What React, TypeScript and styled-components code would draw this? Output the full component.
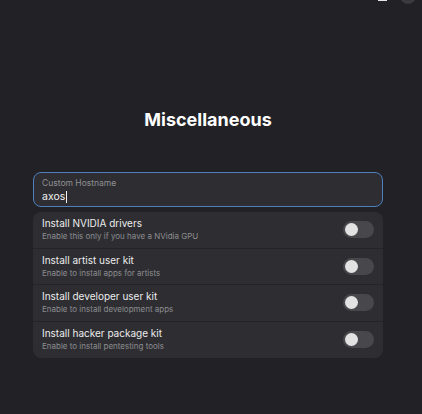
import React from 'react';
import styled, { createGlobalStyle } from 'styled-components';

const GlobalStyle = createGlobalStyle`
  html, body {
    margin: 0;
    padding: 0;
    background: #222226;
    font-family: Inter, "Noto Sans", sans-serif;
    color: #ffffff;
  }
`;

const Page = styled.div`
  position: relative;
  width: 422px;
  height: 414px;
  box-sizing: border-box;
  padding-right: 6px;
  overflow: hidden;
  display: flex;
  flex-direction: column;
  align-items: center;
`;

const HeaderBits = styled.div`
  position: absolute;
  top: 0;
  right: 0;
  width: 60px;
  height: 10px;
`;

const MenuBar = styled.div`
  position: absolute;
  top: -1px;
  left: 16px;
  width: 9px;
  height: 2px;
  background: #e6e6e6;
`;

const CloseCircle = styled.div`
  position: absolute;
  top: -12px;
  left: 38px;
  width: 16px;
  height: 16px;
  border-radius: 50%;
  background: #3a3a3e;
`;

const Title = styled.h1`
  margin: 109px 0 0;
  font-size: 18px;
  font-weight: 700;
  line-height: 22px;
`;

const Form = styled.div`
  margin-top: 41px;
  width: 350px;
  display: flex;
  flex-direction: column;
  gap: 5px;
`;

const Entry = styled.div`
  height: 35px;
  box-sizing: border-box;
  border: 1.5px solid #4f7fbf;
  border-radius: 8px;
  background: #2e2e32;
  padding: 5px 8px 0;
  display: flex;
  flex-direction: column;
`;

const EntryLabel = styled.span`
  font-size: 8.5px;
  line-height: 11px;
  color: #8e8e92;
`;

const EntryValue = styled.span`
  font-size: 10.5px;
  line-height: 15px;
  color: #f2f2f2;
  display: flex;
  align-items: center;
`;

const Caret = styled.span`
  display: inline-block;
  width: 1px;
  height: 12px;
  background: #f2f2f2;
  margin-left: 1px;
`;

const List = styled.div`
  background: #2e2e32;
  border-radius: 8px;
  overflow: hidden;
`;

const Row = styled.div<{ $last?: boolean }>`
  height: 36.5px;
  box-sizing: border-box;
  padding: 0 9px;
  display: flex;
  align-items: center;
  justify-content: space-between;
  border-bottom: ${(p) => (p.$last ? 'none' : '1px solid #242428')};
`;

const RowText = styled.div`
  display: flex;
  flex-direction: column;
  gap: 1px;
`;

const RowTitle = styled.span`
  font-size: 10px;
  line-height: 13px;
  color: #ececec;
`;

const RowSubtitle = styled.span`
  font-size: 8px;
  line-height: 11px;
  color: #8c8c90;
`;

const Switch = styled.div`
  width: 31px;
  height: 17px;
  border-radius: 9px;
  background: #48484c;
  display: flex;
  align-items: center;
  padding: 0 2px;
  box-sizing: border-box;
`;

const Knob = styled.div`
  width: 13px;
  height: 13px;
  border-radius: 50%;
  background: #e2e2e2;
`;

const options = [
  { title: 'Install NVIDIA drivers', subtitle: 'Enable this only if you have a NVidia GPU' },
  { title: 'Install artist user kit', subtitle: 'Enable to install apps for artists' },
  { title: 'Install developer user kit', subtitle: 'Enable to install development apps' },
  { title: 'Install hacker package kit', subtitle: 'Enable to install pentesting tools' },
];

export default function App() {
  return (
    <>
      <GlobalStyle />
      <Page>
        <HeaderBits>
          <MenuBar />
          <CloseCircle />
        </HeaderBits>
        <Title>Miscellaneous</Title>
        <Form>
          <Entry>
            <EntryLabel>Custom Hostname</EntryLabel>
            <EntryValue>
              axos
              <Caret />
            </EntryValue>
          </Entry>
          <List>
            {options.map((o, i) => (
              <Row key={o.title} $last={i === options.length - 1}>
                <RowText>
                  <RowTitle>{o.title}</RowTitle>
                  <RowSubtitle>{o.subtitle}</RowSubtitle>
                </RowText>
                <Switch>
                  <Knob />
                </Switch>
              </Row>
            ))}
          </List>
        </Form>
      </Page>
    </>
  );
}
